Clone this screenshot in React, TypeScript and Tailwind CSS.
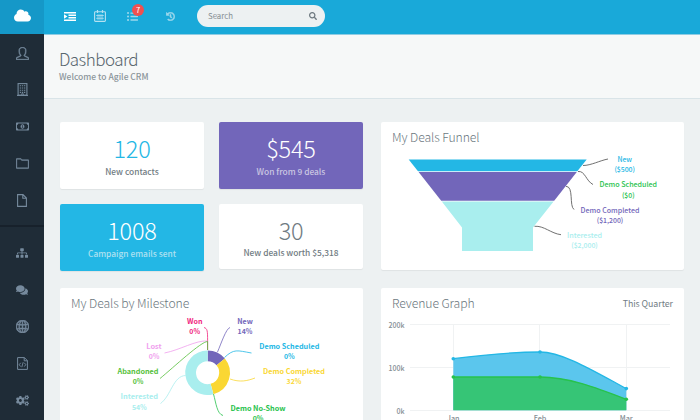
import React from 'react';
import { FaCloud, FaCogs, FaComments, FaHistory, FaListUl, FaRegMoneyBillAlt, FaSearch, FaSitemap } from 'react-icons/fa';
import { SlFolder, SlGlobe, SlUser } from 'react-icons/sl';

type Label = {
  lines: [string, string];
  x: number;
  y: number;
  width: number;
  color: string;
};

const ChartLabel: React.FC<{ label: Label; weight?: number }> = ({ label, weight = 700 }) => (
  <g fill={label.color} fontSize={6.9} fontWeight={weight} textAnchor="middle">
    <text x={label.x} y={label.y} textLength={label.width} lengthAdjust="spacingAndGlyphs">
      {label.lines[0]}
    </text>
    <text x={label.x} y={label.y + 10.3}>
      {label.lines[1]}
    </text>
  </g>
);

const IndentIcon: React.FC = () => (
  <svg viewBox="0 0 12 9" className="ml-5 h-[9px] w-3" fill="currentColor">
    <path d="M0 0H12V1.5H0ZM4.5 2.5H12V4H4.5ZM4.5 5H12V6.5H4.5ZM0 7.5H12V9H0ZM0 2.2L3.5 4.5L0 6.8Z" />
  </svg>
);

const CalendarIcon: React.FC = () => (
  <svg viewBox="0 0 12 12" className="ml-[18px] h-3 w-3" fill="none" stroke="currentColor">
    <rect x="0.6" y="1.8" width="10.8" height="9.6" rx="0.8" strokeWidth="1.1" />
    <path d="M3.5 0V3M8.5 0V3" strokeWidth="1.2" />
    <path d="M2.2 5.5H9.8M2.2 8.3H9.8M4 4.2V9.8M6 4.2V9.8M8 4.2V9.8" strokeWidth="0.8" />
  </svg>
);

const BuildingIcon: React.FC = () => (
  <svg viewBox="0 0 11 13" className="h-[13px] w-[11px]" fill="none" stroke="currentColor">
    <path d="M0 12.4H11" strokeWidth="1.1" />
    <rect x="1.1" y="0.6" width="8.8" height="11.6" strokeWidth="1.1" />
    <path d="M2.8 2.8H8.4M2.8 5H8.4M2.8 7.2H8.4M2.8 9.4H8.4" strokeWidth="1.1" strokeDasharray="1.3 0.8" />
    <path d="M4.7 12V10.7H6.3V12" strokeWidth="0.8" />
  </svg>
);

const FileIcon: React.FC = () => (
  <svg viewBox="0 0 10 13" className="h-[13px] w-[10px]" fill="none" stroke="currentColor" strokeWidth="1.1">
    <path d="M0.6 0.6H6L9.4 4V12.4H0.6ZM5.8 0.6V4.2H9.4" />
  </svg>
);

const CodeFileIcon: React.FC = () => (
  <svg viewBox="0 0 11 13" className="h-[13px] w-[11px]" fill="none" stroke="currentColor" strokeWidth="1">
    <path d="M0.6 0.6H7.4L10.4 3.6V12.4H0.6ZM7.2 0.6V3.8H10.4" />
    <path d="M3.7 5.8L2.2 7.7L3.7 9.6M7.3 5.8L8.8 7.7L7.3 9.6M6.2 5.2L4.8 10.2" strokeWidth="0.9" />
  </svg>
);

const Sidebar: React.FC = () => (
  <aside className="flex w-11 shrink-0 flex-col bg-[#1f2c37] text-[13px] text-[#768a9d]">
    <div className="flex h-[34px] shrink-0 items-center justify-center bg-[#1598c8] text-white">
      <FaCloud className="mt-[-3px] h-[17px] w-[17px]" />
    </div>
    <nav className="flex h-[193px] shrink-0 flex-col items-center border-b-2 border-[#17212b]">
      <a className="flex h-[37px] items-center pt-0.5"><SlUser strokeWidth={35} /></a>
      <a className="flex h-[37px] items-center"><BuildingIcon /></a>
      <a className="flex h-[37px] items-center"><FaRegMoneyBillAlt /></a>
      <a className="flex h-[37px] items-center"><SlFolder strokeWidth={35} /></a>
      <a className="flex h-[37px] items-center"><FileIcon /></a>
    </nav>
    <nav className="flex flex-col items-center pt-[7px]">
      <a className="flex h-[37px] items-center"><FaSitemap className="h-3 w-3" /></a>
      <a className="flex h-[37px] items-center"><FaComments className="h-3 w-3" /></a>
      <a className="flex h-[37px] items-center"><SlGlobe strokeWidth={45} /></a>
      <a className="flex h-[37px] items-center"><CodeFileIcon /></a>
      <a className="flex h-[37px] items-center"><FaCogs /></a>
    </nav>
  </aside>
);

const TopBar: React.FC = () => (
  <header className="flex h-[35px] shrink-0 items-center border-b border-[#8fcce3] bg-[#19a9d9] pb-[2px] text-[#b5e1f1]">
    <div className="text-white">
      <IndentIcon />
    </div>
    <CalendarIcon />
    <div className="relative ml-[21px]">
      <FaListUl className="h-[11px] w-[11px] text-[#9dd8ec]" />
      <span className="absolute -top-[7px] left-[5px] flex h-3 w-3 items-center justify-center rounded-full bg-[#f05050] text-[7.5px] leading-none text-white">
        7
      </span>
    </div>
    <FaHistory className="ml-[28px] h-[9px] w-[9px] text-[#9dd8ec]" stroke="currentColor" strokeWidth={25} />
    <div className="ml-[22px] flex h-[22px] w-32 items-center justify-between rounded-full bg-[#edf1f2] pr-2 pl-[11px]">
      <span className="text-[7.8px] text-[#868e94]">Search</span>
      <FaSearch className="h-2 w-2 text-[#6d787f]" />
    </div>
  </header>
);

const StatCard: React.FC<{
  value: string;
  text: string;
  className: string;
  valueClass?: string;
  textClass?: string;
}> = ({ value, text, className, valueClass = '', textClass = '' }) => (
  <div className={`flex flex-col items-center rounded-[2px] shadow-[0_1px_1px_rgba(0,0,0,0.06)] ${className}`}>
    <div className={`mt-[9px] text-[23.5px] leading-[34px] font-light tracking-[-0.2px] ${valueClass}`}>{value}</div>
    <div className={`text-[8.4px] leading-[12px] font-medium ${textClass}`}>{text}</div>
  </div>
);

const titleClass = 'text-[12.2px] leading-[18px] font-light tracking-[-0.08px] text-[#6b777e]';

const funnelLabels: Label[] = [
  { lines: ['New', '($500)'], x: 624.7, y: 162, width: 14.5, color: '#23b7e5' },
  { lines: ['Demo Scheduled', '($0)'], x: 628.3, y: 187.3, width: 57.5, color: '#27c24c' },
  { lines: ['Demo Completed', '($1,200)'], x: 610, y: 212.5, width: 59, color: '#7266ba' },
  { lines: ['Interested', '($2,000)'], x: 584.5, y: 237.6, width: 35, color: '#a9eeee' },
];

const DealsFunnel: React.FC = () => (
  <section className="h-[148px] rounded-[2px] bg-white shadow-[0_1px_1px_rgba(0,0,0,0.06)]">
    <div className="h-7 pt-[6px] pl-[11px]">
      <h3 className={titleClass}>My Deals Funnel</h3>
    </div>
    <svg viewBox="381 150 303 120" className="h-[120px] w-[303px]">
      <path d="M408.7 159.5H586.7L577.3 171.2H418Z" fill="#23b7e5" />
      <path d="M418.6 172H576.8L554.2 200.8H441.2Z" fill="#7266ba" />
      <path d="M441.8 201.4H553.6L533 227.5V251H462V227.5Z" fill="#a9eeee" />
      <g fill="none" stroke="#606060" strokeWidth="0.9">
        <path d="M583 165.5C591 165.5 600 160.5 608 159" />
        <path d="M578 171.5C585 170.5 586 181 593 184.5" />
        <path d="M566 186.3C574 186.3 569 206 574 209.5" />
        <path d="M534.5 226.3C544 225.5 551 233.5 561 234.7" />
      </g>
      {funnelLabels.map((label) => (
        <ChartLabel key={label.lines[0]} label={label} weight={500} />
      ))}
    </svg>
  </section>
);

const milestoneLabels: Label[] = [
  { lines: ['Won', '0%'], x: 194.7, y: 324, width: 15.5, color: '#f0257c' },
  { lines: ['New', '14%'], x: 245, y: 324, width: 15.5, color: '#7266ba' },
  { lines: ['Lost', '0%'], x: 154, y: 349, width: 15.5, color: '#f0a0ee' },
  { lines: ['Demo Scheduled', '0%'], x: 289.3, y: 349, width: 60, color: '#23b7e5' },
  { lines: ['Abandoned', '0%'], x: 138, y: 374, width: 41, color: '#55bf3b' },
  { lines: ['Demo Completed', '32%'], x: 294, y: 374, width: 62, color: '#fad733' },
  { lines: ['Interested', '54%'], x: 139.3, y: 399.2, width: 37.5, color: '#a9eeee' },
  { lines: ['Demo No-Show', '0%'], x: 258, y: 411, width: 55, color: '#27c24c' },
];

const DealsByMilestone: React.FC = () => (
  <section className="h-[132px] overflow-hidden rounded-t-[2px] bg-white">
    <div className="h-7 pt-[6px] pl-[11px]">
      <h3 className={titleClass}>My Deals by Milestone</h3>
    </div>
    <svg viewBox="60 316 303 104" className="h-[104px] w-[303px]">
      <g fill="none" strokeWidth="10.8">
        <path d="M207.7 355.8A16.9 16.9 0 0 1 220.7 361.9" stroke="#7266ba" />
        <path d="M220.7 361.9A16.9 16.9 0 0 1 212 389" stroke="#fad733" />
        <path d="M212 389A16.9 16.9 0 1 1 207.7 355.8" stroke="#a9eeee" />
      </g>
      <g fill="none" strokeWidth="0.8">
        <path d="M207.6 350V341C207.6 331 207.5 328.5 204 327.5" stroke="#f0257c" />
        <path d="M207.5 341C196 340 180 350 164.5 353" stroke="#f0a0ee" />
        <path d="M207.6 350V341.5C201 341.5 174 367 160 378.5" stroke="#55bf3b" />
        <path d="M217.5 352C221 344 226 328.5 230 327.5" stroke="#7266ba" />
        <path d="M224.5 357.5C234 348.5 237 350.5 251.5 353" stroke="#23b7e5" />
        <path d="M230 379C240 382.5 247 381 255 378" stroke="#fad733" />
        <path d="M185.5 375.5C173 376 171 396 160.5 403.5" stroke="#a9eeee" />
        <path d="M213.5 394C216 403 217 414 223 415.5" stroke="#27c24c" />
      </g>
      {milestoneLabels.map((label) => (
        <ChartLabel key={label.lines[0]} label={label} />
      ))}
    </svg>
  </section>
);

const RevenueGraph: React.FC = () => (
  <section className="h-[132px] overflow-hidden rounded-t-[2px] bg-white">
    <div className="flex h-7 justify-between pt-[6px] pr-[11px] pl-[11px]">
      <h3 className={titleClass}>Revenue Graph</h3>
      <span className="text-[8.8px] leading-[20px] tracking-[-0.04px] text-[#727d84]">This Quarter</span>
    </div>
    <svg viewBox="381 316 303 104" className="h-[104px] w-[303px]">
      <path
        d="M410 324.5H670M410 367.5H670M410 410.5H670M453.5 324V410M539.5 324V410M626.5 324V410"
        fill="none"
        stroke="#f0f2f3"
        strokeWidth="1"
      />
      <path d="M453.3 358.7C482 355 511 352 540 352C562 352 592 370 626.3 388.6V410.3H453.3Z" fill="#5bc6ed" />
      <path d="M453.3 377H540C568 377 595 387 626.3 399.3V410.3H453.3Z" fill="#36c576" />
      <g fill="none" strokeWidth="1.3">
        <path d="M453.3 358.7C482 355 511 352 540 352C562 352 592 370 626.3 388.6" stroke="#23b7e5" />
        <path d="M453.3 377H540C568 377 595 387 626.3 399.3" stroke="#27c24c" />
      </g>
      <g fill="#23b7e5">
        <circle cx="453.3" cy="358.7" r="1.8" />
        <circle cx="540" cy="352" r="1.8" />
        <circle cx="626.3" cy="388.6" r="1.8" />
      </g>
      <g fill="#27c24c">
        <circle cx="453.3" cy="377" r="1.8" />
        <circle cx="540" cy="377" r="1.8" />
        <circle cx="626.3" cy="399.3" r="1.8" />
      </g>
      <g fill="#858e94" fontSize="7" fontWeight="500" textAnchor="end">
        <text x="404.5" y="328">200k</text>
        <text x="404.5" y="371">100k</text>
        <text x="404.5" y="414">0k</text>
      </g>
      <g fill="#858e94" fontSize="7.2" fontWeight="500" textAnchor="middle">
        <text x="453.3" y="420.6">Jan</text>
        <text x="540" y="420.6">Feb</text>
        <text x="626.3" y="420.6">Mar</text>
      </g>
    </svg>
  </section>
);

const App: React.FC = () => {
  return (
    <div className="flex h-[420px] w-[700px] overflow-hidden bg-[#edf1f2] font-['Noto_Sans_CJK_SC','Noto_Sans',sans-serif]">
      <Sidebar />
      <main className="flex min-w-0 flex-1 flex-col">
        <TopBar />
        <div className="h-16 shrink-0 border-b border-[#d9e4e8] bg-[#f6f8f8] pt-[12px] pl-[15px]">
          <h1 className="text-[17px] leading-[23px] font-light tracking-[-0.55px] text-[#58666e]">Dashboard</h1>
          <p className="text-[8.5px] leading-[13px] font-medium text-[#8b959a]">Welcome to Agile CRM</p>
        </div>
        <div className="flex gap-[18px] pt-[23px] pl-4">
          <div className="flex w-[303px] flex-col gap-[17px]">
            <div className="grid h-[149px] grid-cols-[144px_144px] content-start gap-x-[15px] gap-y-[15px]">
              <StatCard value="120" text="New contacts" className="h-[67px] bg-white text-[#707b82]" valueClass="text-[#23b7e5]" />
              <StatCard value="$545" text="Won from 9 deals" className="h-[67px] bg-[#7266ba] text-[#cbc6e2]" valueClass="text-white" />
              <StatCard value="1008" text="Campaign emails sent" className="h-[67px] bg-[#23b7e5] text-[#b0e1f1]" valueClass="text-white" />
              <StatCard value="30" text="New deals worth $5,318" className="h-[65px] bg-white text-[#707b82]" textClass="-mt-px" />
            </div>
            <DealsByMilestone />
          </div>
          <div className="flex w-[303px] flex-col gap-[18px]">
            <DealsFunnel />
            <RevenueGraph />
          </div>
        </div>
      </main>
    </div>
  );
};

export default App;
